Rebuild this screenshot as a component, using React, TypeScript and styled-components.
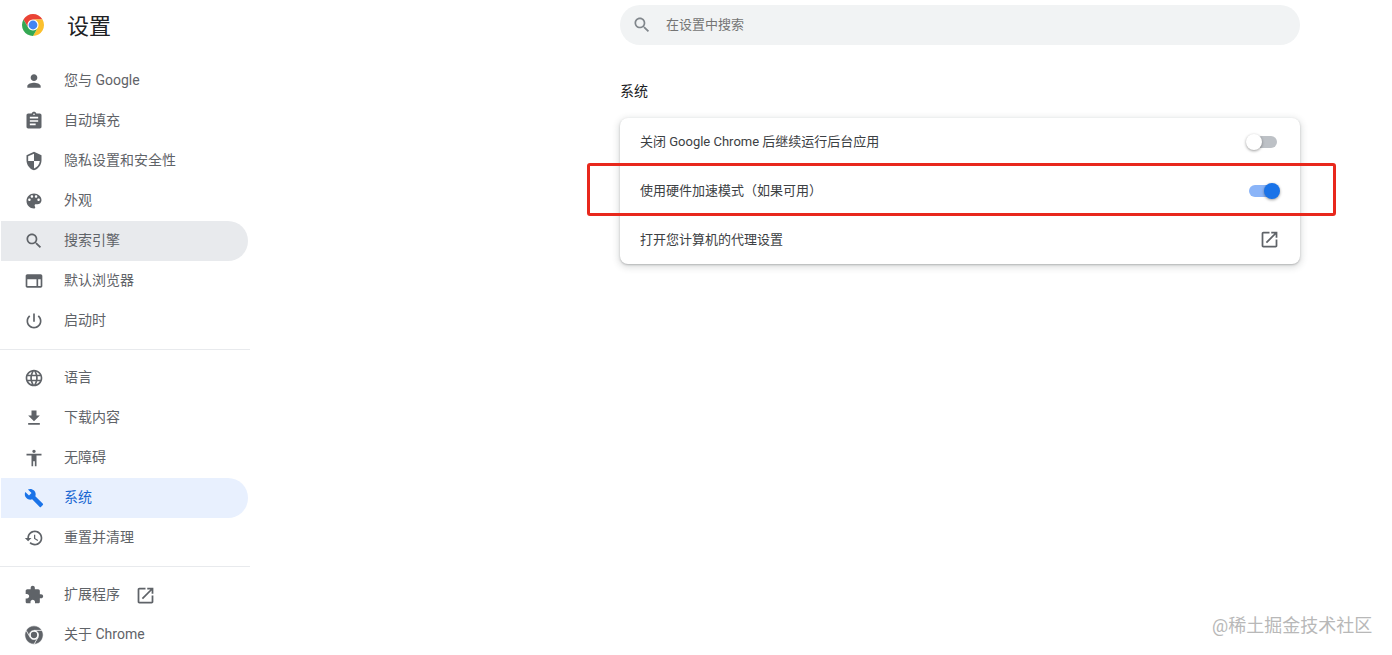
import styled, { createGlobalStyle } from 'styled-components';

const GlobalStyle = createGlobalStyle`
  html, body {
    margin: 0;
    padding: 0;
    background: #fff;
  }
  body {
    font-family: Roboto, 'Noto Sans CJK SC', sans-serif;
    overflow: hidden;
  }
`;

const ICONS = {
  person:
    'M12 12c2.21 0 4-1.79 4-4s-1.79-4-4-4-4 1.79-4 4 1.79 4 4 4zm0 2c-2.67 0-8 1.34-8 4v2h16v-2c0-2.66-5.33-4-8-4z',
  assignment:
    'M19 3h-4.18C14.4 1.84 13.3 1 12 1c-1.3 0-2.4.84-2.82 2H5c-1.1 0-2 .9-2 2v14c0 1.1.9 2 2 2h14c1.1 0 2-.9 2-2V5c0-1.1-.9-2-2-2zm-7 0c.55 0 1 .45 1 1s-.45 1-1 1-1-.45-1-1 .45-1 1-1zm2 14H7v-2h7v2zm3-4H7v-2h10v2zm0-4H7V7h10v2z',
  security:
    'M12 1L3 5v6c0 5.55 3.84 10.74 9 12 5.16-1.26 9-6.45 9-12V5l-9-4zm0 10.99h7c-.53 4.12-3.28 7.79-7 8.94V12H5V6.3l7-3.11v8.8z',
  palette:
    'M12 3c-4.97 0-9 4.03-9 9s4.03 9 9 9c.83 0 1.5-.67 1.5-1.5 0-.39-.15-.74-.39-1.01-.23-.26-.38-.61-.38-.99 0-.83.67-1.5 1.5-1.5H16c2.76 0 5-2.24 5-5 0-4.42-4.03-8-9-8zm-5.5 9c-.83 0-1.5-.67-1.5-1.5S5.67 9 6.5 9 8 9.67 8 10.5 7.33 12 6.5 12zm3-4C8.67 8 8 7.33 8 6.5S8.67 5 9.5 5s1.5.67 1.5 1.5S10.33 8 9.5 8zm5 0c-.83 0-1.5-.67-1.5-1.5S13.67 5 14.5 5s1.5.67 1.5 1.5S15.33 8 14.5 8zm3 4c-.83 0-1.5-.67-1.5-1.5S16.67 9 17.5 9s1.5.67 1.5 1.5-.67 1.5-1.5 1.5z',
  search:
    'M15.5 14h-.79l-.28-.27C15.41 12.59 16 11.11 16 9.5 16 5.91 13.09 3 9.5 3S3 5.91 3 9.5 5.91 16 9.5 16c1.61 0 3.09-.59 4.23-1.57l.27.28v.79l5 4.99L20.49 19l-4.99-5zm-6 0C7.01 14 5 11.99 5 9.5S7.01 5 9.5 5 14 7.01 14 9.5 11.99 14 9.5 14z',
  browser:
    'M20 4H4c-1.1 0-2 .9-2 2v12c0 1.1.9 2 2 2h16c1.1 0 2-.9 2-2V6c0-1.1-.9-2-2-2zm-5 14H4v-8h11v8zm5 0h-3v-8h3v8z',
  power:
    'M13 3h-2v10h2V3zm4.83 2.17l-1.42 1.42C17.99 7.86 19 9.81 19 12c0 3.87-3.13 7-7 7s-7-3.13-7-7c0-2.19 1.01-4.14 2.58-5.42L6.17 5.17C4.23 6.82 3 9.26 3 12c0 4.97 4.03 9 9 9s9-4.03 9-9c0-2.74-1.23-5.18-3.17-6.83z',
  language:
    'M11.99 2C6.47 2 2 6.48 2 12s4.47 10 9.99 10C17.52 22 22 17.52 22 12S17.52 2 11.99 2zm6.93 6h-2.95c-.32-1.25-.78-2.45-1.38-3.56 1.84.63 3.37 1.91 4.33 3.56zM12 4.04c.83 1.2 1.48 2.53 1.91 3.96h-3.82c.43-1.43 1.08-2.76 1.91-3.96zM4.26 14C4.1 13.36 4 12.69 4 12s.1-1.36.26-2h3.38c-.08.66-.14 1.32-.14 2 0 .68.06 1.34.14 2H4.26zm.82 2h2.95c.32 1.25.78 2.45 1.38 3.56-1.84-.63-3.37-1.9-4.33-3.56zm2.95-8H5.08c.96-1.66 2.49-2.93 4.33-3.56C8.81 5.55 8.35 6.75 8.03 8zM12 19.96c-.83-1.2-1.48-2.53-1.91-3.96h3.82c-.43 1.43-1.08 2.76-1.91 3.96zM14.34 14H9.66c-.09-.66-.16-1.32-.16-2 0-.68.07-1.35.16-2h4.68c.09.65.16 1.32.16 2 0 .68-.07 1.34-.16 2zm.25 5.56c.6-1.11 1.06-2.31 1.38-3.56h2.95c-.96 1.65-2.49 2.93-4.33 3.56zM16.36 14c.08-.66.14-1.32.14-2 0-.68-.06-1.34-.14-2h3.38c.16.64.26 1.31.26 2s-.1 1.36-.26 2h-3.38z',
  download: 'M19 9h-4V3H9v6H5l7 7 7-7zM5 18v2h14v-2H5z',
  accessibility:
    'M12 2c1.1 0 2 .9 2 2s-.9 2-2 2-2-.9-2-2 .9-2 2-2zm9 7h-6v13h-2v-6h-2v6H9V9H3V7h18v2z',
  build:
    'M22.7 19l-9.1-9.1c.9-2.3.4-5-1.5-6.9-2-2-5-2.4-7.4-1.3L9 6 6 9 1.6 4.7C.4 7.1.9 10.1 2.9 12.1c1.9 1.9 4.6 2.4 6.9 1.5l9.1 9.1c.4.4 1 .4 1.4 0l2.3-2.3c.5-.4.5-1.1.1-1.4z',
  restore:
    'M13 3c-4.97 0-9 4.03-9 9H1l3.89 3.89.07.14L9 12H6c0-3.87 3.13-7 7-7s7 3.13 7 7-3.13 7-7 7c-1.93 0-3.68-.79-4.94-2.06l-1.42 1.42C8.27 19.99 10.51 21 13 21c4.97 0 9-4.03 9-9s-4.03-9-9-9zm-1 5v5l4.28 2.54.72-1.21-3.5-2.08V8H12z',
  extension:
    'M20.5 11H19V7c0-1.1-.9-2-2-2h-4V3.5C13 2.12 11.88 1 10.5 1S8 2.12 8 3.5V5H4c-1.1 0-1.99.9-1.99 2v3.8H3.5c1.49 0 2.7 1.21 2.7 2.7s-1.21 2.7-2.7 2.7H2V20c0 1.1.9 2 2 2h3.8v-1.5c0-1.49 1.21-2.7 2.7-2.7 1.49 0 2.7 1.21 2.7 2.7V22H17c1.1 0 2-.9 2-2v-4h1.5c1.38 0 2.5-1.12 2.5-2.5S21.88 11 20.5 11z',
  openInNew:
    'M19 19H5V5h7V3H5c-1.11 0-2 .9-2 2v14c0 1.1.89 2 2 2h14c1.1 0 2-.9 2-2v-7h-2v7zM14 3v2h3.59l-9.83 9.83 1.41 1.41L19 6.41V10h2V3h-7z',
};

type IconName = keyof typeof ICONS;

const Page = styled.div`
  display: flex;
  height: 655px;
  background: #fff;
  overflow: hidden;
`;

const Sidebar = styled.aside`
  flex: 0 0 250px;
  display: flex;
  flex-direction: column;
`;

const Header = styled.header`
  display: flex;
  align-items: center;
  gap: 22px;
  height: 50px;
  margin-bottom: 11px;
  padding-left: 21px;
`;

const Title = styled.h1`
  margin: 0 0 2px;
  font-size: 22px;
  font-weight: 400;
  color: #202124;
`;

const NavGroup = styled.nav`
  display: flex;
  flex-direction: column;
`;

const Divider = styled.hr`
  width: 100%;
  height: 1px;
  margin: 8px 0;
  border: 0;
  background: #e8eaed;
`;

const NavItem = styled.a<{ $tone?: 'active' | 'hover' }>`
  display: flex;
  align-items: center;
  width: 247px;
  height: 40px;
  margin-left: 1px;
  padding-left: 23px;
  box-sizing: border-box;
  border-radius: 0 20px 20px 0;
  font-size: 14px;
  color: ${(p) => (p.$tone === 'active' ? '#1967d2' : '#5f6368')};
  background: ${(p) =>
    p.$tone === 'active' ? '#e8f0fe' : p.$tone === 'hover' ? '#e8eaed' : 'transparent'};
`;

const NavLabel = styled.span`
  margin: 0 0 4px 20px;
`;

const Svg = styled.svg<{ $size: number; $color: string; $gap?: number }>`
  flex: none;
  display: block;
  width: ${(p) => p.$size}px;
  height: ${(p) => p.$size}px;
  margin-left: ${(p) => p.$gap ?? 0}px;
  fill: ${(p) => p.$color};
`;

const Main = styled.main`
  flex: none;
  width: 680px;
  margin-left: 370px;
  padding-top: 5px;
`;

const SearchBar = styled.div`
  display: flex;
  align-items: center;
  gap: 14px;
  height: 40px;
  padding-left: 12px;
  border-radius: 20px;
  background: #f1f3f4;
`;

const SearchText = styled.span`
  margin-bottom: 4px;
  font-size: 13px;
  color: #757575;
`;

const SectionTitle = styled.h2`
  margin: 37px 0 18px;
  font-size: 14px;
  line-height: 18px;
  font-weight: 400;
  color: #202124;
`;

const Card = styled.section`
  display: grid;
  grid-auto-rows: 1fr;
  height: 146px;
  border-radius: 8px;
  background: #fff;
  box-shadow: 0 1px 2px rgba(60, 64, 67, 0.3), 0 2px 6px 2px rgba(60, 64, 67, 0.15);
`;

const Row = styled.div`
  display: flex;
  align-items: center;
  justify-content: space-between;
  padding: 0 20px;
  font-size: 13px;
  color: #3c4043;
`;

const RowLabel = styled.span`
  margin-bottom: 3px;
`;

const Toggle = styled.span<{ $on?: boolean }>`
  position: relative;
  width: 28px;
  height: 12px;
  margin-right: 3px;
  border-radius: 6px;
  background: ${(p) => (p.$on ? '#8ab4f8' : '#bdc1c6')};
  &::after {
    content: '';
    position: absolute;
    top: -2px;
    left: ${(p) => (p.$on ? '15px' : '-3px')};
    width: 16px;
    height: 16px;
    border-radius: 50%;
    background: ${(p) => (p.$on ? '#1a73e8' : '#fff')};
    box-shadow: 0 1px 3px rgba(0, 0, 0, 0.4);
  }
`;

const Highlight = styled.div`
  position: absolute;
  left: 587px;
  top: 163px;
  width: 749px;
  height: 53px;
  box-sizing: border-box;
  border: 3px solid #e8281c;
  border-radius: 3px;
  pointer-events: none;
`;

const Watermark = styled.div`
  position: absolute;
  left: 1212px;
  top: 613px;
  font-size: 18px;
  line-height: 26px;
  color: #b8b8b8;
  white-space: nowrap;
`;

const Icon = ({ name, size = 20, color = '#5f6368', gap }: { name: IconName; size?: number; color?: string; gap?: number }) => (
  <Svg viewBox="0 0 24 24" $size={size} $color={color} $gap={gap}>
    <path d={ICONS[name]} />
  </Svg>
);

const SECTORS = [
  'M2.474 6.5A11 11 0 0 1 21.526 6.5H12A5.5 5.5 0 0 0 7.237 14.75Z',
  'M21.526 6.5A11 11 0 0 1 12 23L16.763 14.75A5.5 5.5 0 0 0 12 6.5Z',
  'M12 23A11 11 0 0 1 2.474 6.5L7.237 14.75A5.5 5.5 0 0 0 16.763 14.75Z',
];

const ChromeLogo = ({ size, tones, core, seam }: { size: number; tones: string[]; core: string; seam?: boolean }) => (
  <Svg viewBox="0 0 24 24" $size={size} $color={core}>
    {SECTORS.map((d, i) => (
      <path key={d} d={d} fill={tones[i]} stroke={seam ? '#fff' : 'none'} strokeWidth={seam ? 0.7 : 0} />
    ))}
    <circle cx="12" cy="12" r={seam ? 3.8 : 4.4} />
  </Svg>
);

const primaryNav: { icon: IconName; label: string; tone?: 'active' | 'hover' }[] = [
  { icon: 'person', label: '您与 Google' },
  { icon: 'assignment', label: '自动填充' },
  { icon: 'security', label: '隐私设置和安全性' },
  { icon: 'palette', label: '外观' },
  { icon: 'search', label: '搜索引擎', tone: 'hover' },
  { icon: 'browser', label: '默认浏览器' },
  { icon: 'power', label: '启动时' },
];

const advancedNav: { icon: IconName; label: string; tone?: 'active' | 'hover' }[] = [
  { icon: 'language', label: '语言' },
  { icon: 'download', label: '下载内容' },
  { icon: 'accessibility', label: '无障碍' },
  { icon: 'build', label: '系统', tone: 'active' },
  { icon: 'restore', label: '重置并清理' },
];

const renderNav = (items: typeof primaryNav) =>
  items.map((item) => (
    <NavItem key={item.label} $tone={item.tone}>
      <Icon name={item.icon} color={item.tone === 'active' ? '#1a73e8' : '#5f6368'} />
      <NavLabel>{item.label}</NavLabel>
    </NavItem>
  ));

export default function App() {
  return (
    <>
      <GlobalStyle />
      <Page>
        <Sidebar>
          <Header>
            <ChromeLogo size={24} tones={['#ea4335', '#fbc02d', '#34a853']} core="#4285f4" />
            <Title>设置</Title>
          </Header>
          <NavGroup>{renderNav(primaryNav)}</NavGroup>
          <Divider />
          <NavGroup>{renderNav(advancedNav)}</NavGroup>
          <Divider />
          <NavGroup>
            <NavItem>
              <Icon name="extension" />
              <NavLabel>扩展程序</NavLabel>
              <Icon name="openInNew" size={21} gap={15} />
            </NavItem>
            <NavItem>
              <ChromeLogo size={20} tones={['#5f6368', '#5f6368', '#5f6368']} core="#5f6368" seam />
              <NavLabel>关于 Chrome</NavLabel>
            </NavItem>
          </NavGroup>
        </Sidebar>
        <Main>
          <SearchBar>
            <Icon name="search" color="#80868b" />
            <SearchText>在设置中搜索</SearchText>
          </SearchBar>
          <SectionTitle>系统</SectionTitle>
          <Card>
            <Row>
              <RowLabel>关闭 Google Chrome 后继续运行后台应用</RowLabel>
              <Toggle />
            </Row>
            <Row>
              <RowLabel>使用硬件加速模式（如果可用）</RowLabel>
              <Toggle $on />
            </Row>
            <Row>
              <RowLabel>打开您计算机的代理设置</RowLabel>
              <Icon name="openInNew" size={21} />
            </Row>
          </Card>
        </Main>
      </Page>
      <Highlight />
      <Watermark>@稀土掘金技术社区</Watermark>
    </>
  );
}
